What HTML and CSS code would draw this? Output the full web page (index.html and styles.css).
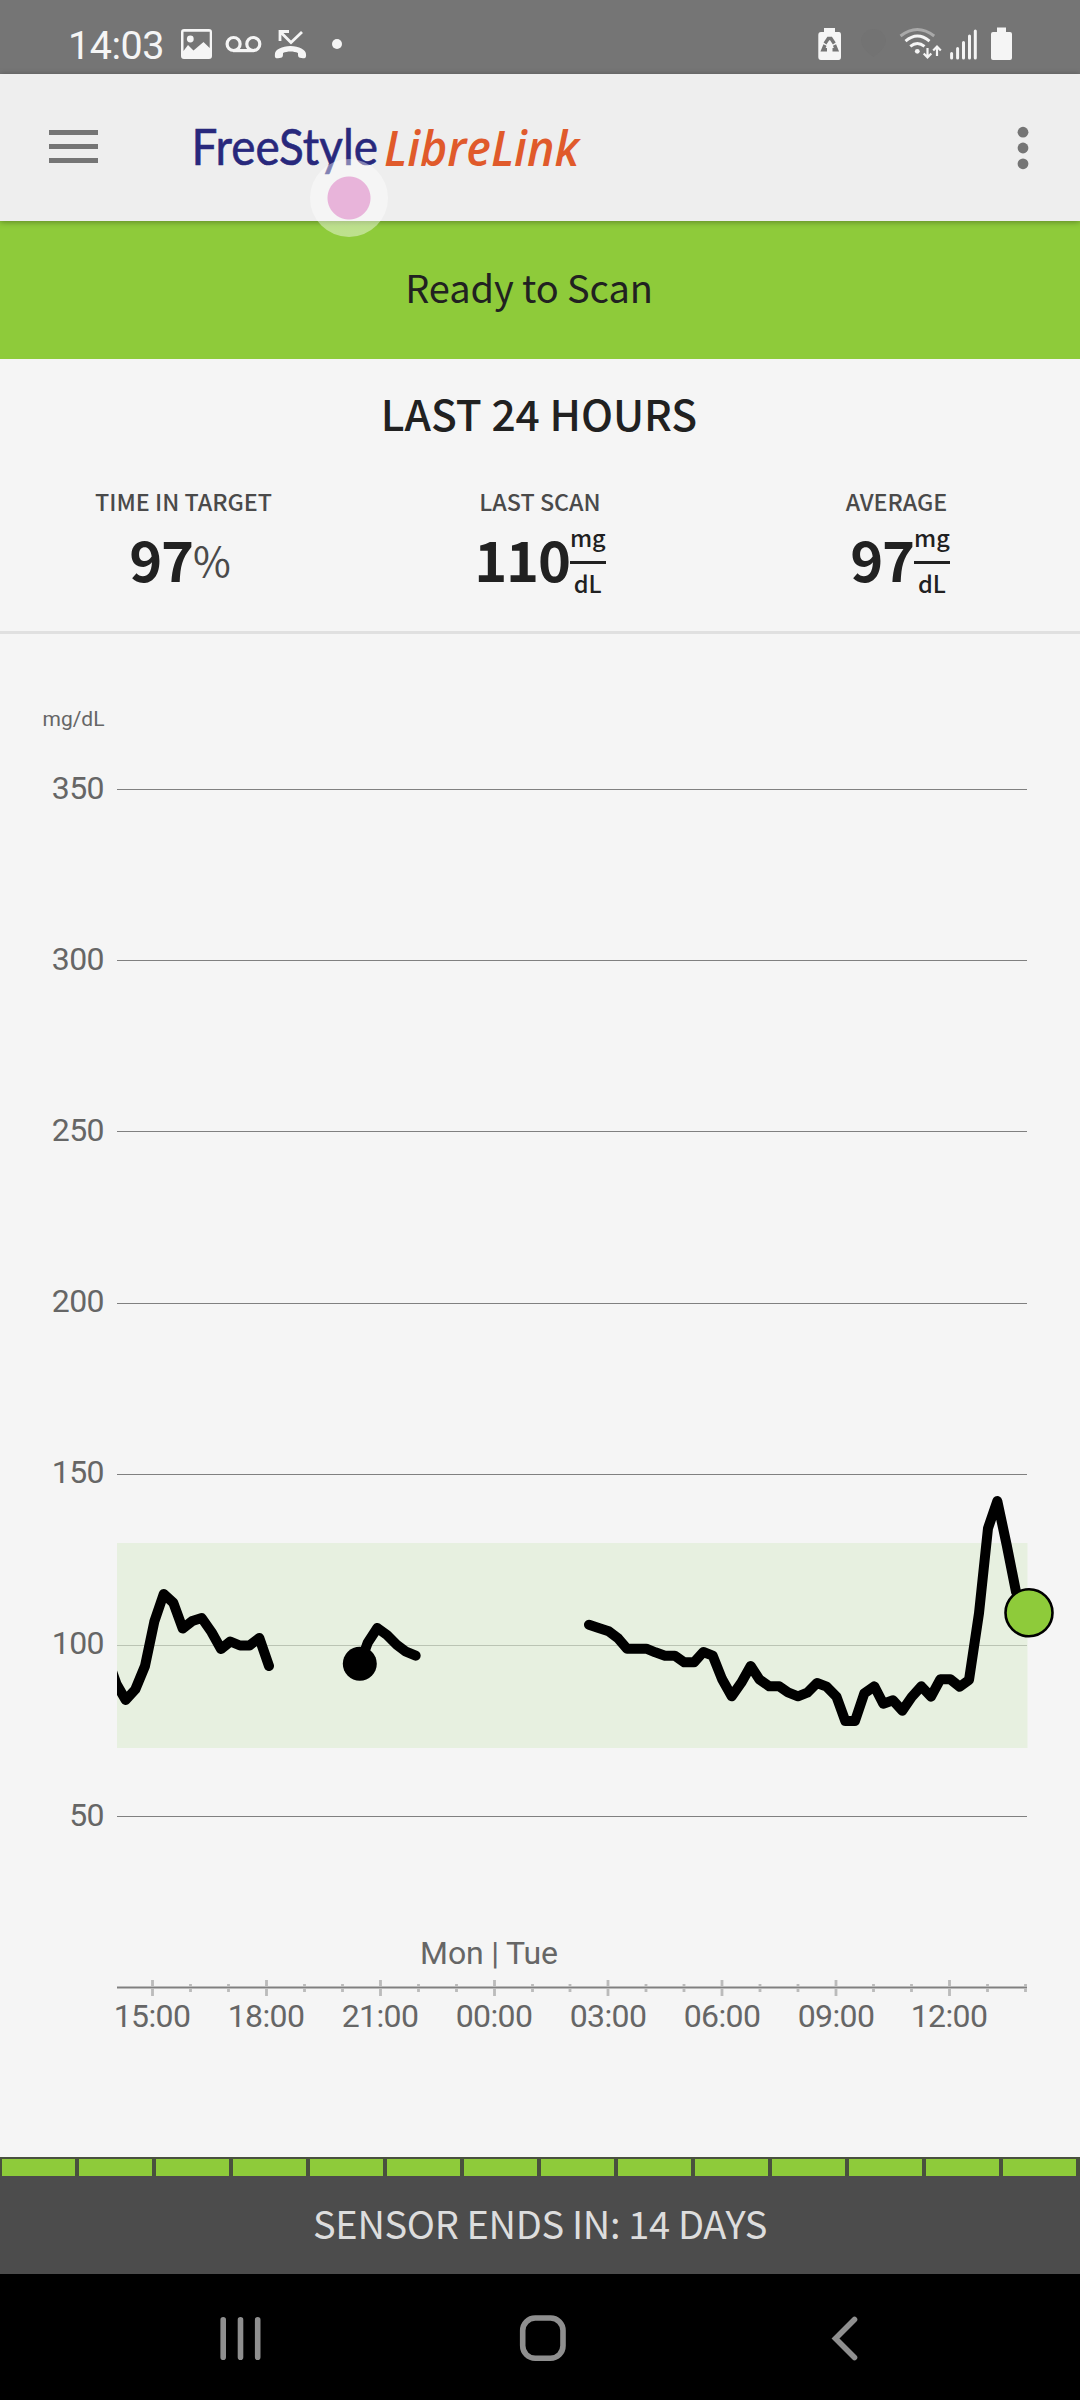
FILE: index.html
```html
<!DOCTYPE html>
<html lang="en">
<head>
<meta charset="utf-8">
<title>FreeStyle LibreLink</title>
<link rel="stylesheet" href="styles.css">
</head>
<body>
<div class="screen">
  <header class="status">
    <span class="clock">14:03</span>
    <svg class="status-left" width="166" height="74" viewBox="176 0 166 74" fill="#f5f5f5">
      <path fill-rule="evenodd" d="M184 29H209Q212 29 212 32V56Q212 59 209 59H184Q181 59 181 56V32Q181 29 184 29ZM183.500 31.700V51L188 45L193.500 50.500L203.500 42L209.700 48V31.700Z"/>
      <circle cx="190.300" cy="39" r="3.400"/>
      <g fill="none" stroke="#f5f5f5" stroke-width="3.200"><circle cx="233.600" cy="44" r="6.500"/><circle cx="253.300" cy="44" r="6.500"/><path d="M233 50.600H254"/></g>
      <path d="M275 53.500C275 50 282 46 290.500 46S306 50 306 54C306.500 58 305 58.500 303 58.200C298 58 298 57 298 53C294 51 287 51 283 53C283 57 283 58 278 58.200C275.500 58.500 274.500 58 275 53.500Z"/>
      <path d="M289 31.500H280V41M280.500 32L291 42.500L302 32" fill="none" stroke="#f5f5f5" stroke-width="2.800"/>
      <circle cx="337" cy="44" r="5"/>
    </svg>
    <svg class="status-right" width="210" height="74" viewBox="810 0 210 74" fill="#f5f5f5">
      <path d="M824 28H835V32H839Q841 32 841 35V57Q841 60 838.500 60H821Q818.300 60 818.300 57V35Q818.300 32 821 32H824Z"/>
      <path d="M825 43.500L828.300 38.500H831L834.300 43.500M834.500 45L836.500 49.800H832.500M827 49.800H823L825 45" fill="none" stroke="#757575" stroke-width="3.400"/>
      <path d="M829.700 41.500L833.300 46H830.700V52H828.700V46H826.100Z"/>
      <path d="M873.500 29A12.500 12.500 0 0 1 886 41.500Q884 50 873.500 57Q863 50 861 41.500A12.500 12.500 0 0 1 873.500 29Z" fill="#737373"/>
      <g fill="none" stroke="#f5f5f5" stroke-width="2.900">
        <path d="M900.500 36Q917.300 23 934.200 36" stroke="#a9a9a9"/><path d="M905.500 41.200Q917.300 31 929.500 41.200"/><path d="M910.300 46.300Q917.300 40.500 924.500 46.300"/>
      </g>
      <circle cx="917.300" cy="51.300" r="2.400"/>
      <path d="M927.500 48V57M923.700 53.500L927.500 57.500L931.300 53.500M937 56V47M933.200 50.500L937 46.500L940.800 50.500" fill="none" stroke="#f5f5f5" stroke-width="2.200"/>
      <path d="M951.600 53.500V58M957.600 48.500V58M963.500 42.500V58M969.500 36V58M975.300 31V58" fill="none" stroke="#f5f5f5" stroke-width="3" stroke-linecap="round"/>
      <path d="M997 27.500H1006V32H1010Q1012 32 1012 34V58Q1012 60 1010 60H993Q991 60 991 58V34Q991 32 993 32H997Z"/>
    </svg>
  </header>

  <nav class="appbar">
    <svg class="menu" width="49" height="35" viewBox="0 0 49 35" fill="#757575"><path d="M0 0H49V5H0ZM0 14H49V19H0ZM0 28H49V33H0Z"/></svg>
    <svg class="logo" width="400" height="100" viewBox="190 98 400 100">
      <text class="logo-free" x="191.500" y="165" textLength="186.500" lengthAdjust="spacingAndGlyphs">FreeStyle</text>
      <text class="logo-libre" x="384" y="166" textLength="195" lengthAdjust="spacingAndGlyphs">LibreLink</text>
    </svg>
    <svg class="more" width="12" height="44" viewBox="0 0 12 44" fill="#757575"><circle cx="6" cy="6.200" r="5.400"/><circle cx="6" cy="22" r="5.400"/><circle cx="6" cy="37.800" r="5.400"/></svg>
    <span class="touch"></span>
  </nav>

  <div class="scan">Ready to Scan</div>

  <section class="summary">
    <h1>LAST 24 HOURS</h1>
    <div class="stats">
      <div class="stat"><div class="label">TIME IN TARGET</div><div class="value first"><b>97</b><span class="percent">%</span></div></div>
      <div class="stat"><div class="label">LAST SCAN</div><div class="value"><b>110</b><span class="unit"><span class="top">mg</span><span class="bottom">dL</span></span></div></div>
      <div class="stat"><div class="label">AVERAGE</div><div class="value shift"><b>97</b><span class="unit"><span class="top">mg</span><span class="bottom">dL</span></span></div></div>
    </div>
  </section>

  <svg class="chart" width="1080" height="1523" viewBox="0 634 1080 1523">
    <path class="grid" d="M117 789.500H1027M117 960.500H1027M117 1131.500H1027M117 1303.500H1027M117 1474.500H1027M117 1645.500H1027M117 1816.500H1027"/>
    <rect x="117" y="1543" width="910.500" height="205" fill="#deedd3" fill-opacity=".62"/>
    <g class="ylabels">
      <text class="small" x="104.500" y="726">mg/dL</text>
      <text x="104" y="798.500">350</text><text x="104" y="969.700">300</text><text x="104" y="1140.900">250</text><text x="104" y="1312">200</text><text x="104" y="1483.200">150</text><text x="104" y="1654.400">100</text><text x="104" y="1825.500">50</text>
    </g>
    <path d="M117 1987.500H1027" stroke="#bbb" stroke-width="3"/>
    <path d="M152.500 1980V1996M266.500 1980V1996M380.500 1980V1996M494.500 1980V1996M608 1980V1996M722 1980V1996M836 1980V1996M949.500 1980V1996M190.500 1984V1992M228.500 1984V1992M304.500 1984V1992M342.500 1984V1992M418.500 1984V1992M456.500 1984V1992M532.500 1984V1992M570 1984V1992M646 1984V1992M684 1984V1992M760 1984V1992M798 1984V1992M873.500 1984V1992M911.500 1984V1992M987.500 1984V1992M1025.500 1984V1992" stroke="#bbb" stroke-width="2.800"/>
    <path class="grid" d="M117 1987.500H1027"/>
    <g class="xlabels">
      <text x="152" y="2026.700">15:00</text><text x="266" y="2026.700">18:00</text><text x="380" y="2026.700">21:00</text><text x="494" y="2026.700">00:00</text><text x="608" y="2026.700">03:00</text><text x="722" y="2026.700">06:00</text><text x="836" y="2026.700">09:00</text><text x="949" y="2026.700">12:00</text>
      <text class="day" x="489" y="1964">Mon | Tue</text>
    </g>
    <clipPath id="plot"><rect x="117" y="700" width="963" height="1290"/></clipPath>
    <g class="trace" clip-path="url(#plot)">
      <polyline points="108,1660 116.500,1684 125.700,1700 135.300,1689.500 145,1666 154.300,1621.700 163.700,1594 173.300,1602.700 182.700,1628.500 192.300,1621 201.700,1618 211.500,1632 221,1649 230.300,1641.500 240,1645.500 249.500,1645.500 259.300,1638 269,1666"/>
      <polyline points="360,1664 367.700,1642.700 377.300,1628 387,1635 396.700,1644.700 406,1651.700 415.700,1655.700"/>
      <polyline points="589,1624.700 598.700,1628 608.700,1631.300 618,1638.300 627,1648.700 636.700,1648.700 646.300,1648.700 655.300,1652.300 665,1655.700 674.700,1655.700 684.300,1662.300 694,1662.300 703.300,1652 712.700,1655.700 722,1679 731.700,1696.300 741.300,1682.700 750.700,1666 759.300,1679.300 769.300,1686.300 779.300,1686.300 788,1692.300 798,1696.300 807.300,1692.700 817,1683 826.700,1686.700 836.500,1696.700 845.300,1721 855,1721 864.300,1693.300 874.300,1686.300 883.300,1703.700 893,1700.300 902.300,1710.700 911.700,1697 921.300,1686.300 931,1696.700 940.300,1679.300 950.300,1679.300 959.700,1686.700 969,1680 979,1613.300 988,1528.300 997.300,1501 1006.700,1545 1016,1591.700 1028,1613"/>
    </g>
    <circle cx="359.800" cy="1663.700" r="17"/>
    <circle cx="1029" cy="1612.700" r="23.500" fill="#8ecb3a" stroke="#000" stroke-width="2.600"/>
  </svg>

  <footer class="sensor">
    <div class="days"><i></i><i></i><i></i><i></i><i></i><i></i><i></i><i></i><i></i><i></i><i></i><i></i><i></i><i></i></div>
    <div class="sensor-text">SENSOR ENDS IN: 14 DAYS</div>
  </footer>

  <div class="navbar">
    <svg width="1080" height="126" viewBox="0 2274 1080 126" fill="none" stroke="#8f8f8f" stroke-width="5.600" stroke-linecap="round">
      <path d="M223.200 2319.800V2357.200M240.500 2319.800V2357.200M257.700 2319.800V2357.200"/>
      <rect x="522.700" y="2318" width="40.300" height="40.300" rx="12.500"/>
      <path d="M854.500 2319.500L835.500 2338.500L854.500 2357.500"/>
    </svg>
  </div>
</div>
</body>
</html>
```
FILE: styles.css
```css
* { box-sizing: border-box; }
body { margin: 0; background: #f5f5f5; font-family: "Noto Sans CJK SC", "Noto Sans", sans-serif; color: #212121; }
svg { display: block; }
.screen { display: flex; flex-direction: column; width: 1080px; height: 2400px; overflow: hidden; }

.status { display: flex; height: 74px; background: #757575; padding-left: 68px; }
.clock { width: 108px; font: 39.5px/91px Roboto, sans-serif; color: #f5f5f5; letter-spacing: -0.5px; }
.status-right { margin: 0 60px 0 auto; }

.appbar { position: relative; display: flex; align-items: center; height: 147px; padding: 0 51px 0 49px; background: #eee; z-index: 1; box-shadow: 0 1px 6px rgba(0, 0, 0, .35); }
.logo { margin-left: 92px; }
.more { margin-left: auto; }
.logo-free { font: 400 50px Lato, sans-serif; fill: #28287c; stroke: #28287c; stroke-width: .6px; }
.logo-libre { font: italic 600 48px "Open Sans", sans-serif; fill: #e05a2b; }
.touch { position: absolute; left: 310px; top: 85px; width: 78px; height: 78px; border-radius: 50%; background: radial-gradient(circle, #e8b4da 21px, rgba(255, 255, 255, .42) 22px); }

.scan { height: 138px; background: #8ecb3a; text-align: center; font-size: 38px; letter-spacing: -0.1px; line-height: 132px; padding-right: 22px; }

.summary { height: 275px; border-bottom: 3px solid #e0e0e0; }
h1 { margin: 0; padding-top: 29px; font-size: 42.5px; font-weight: 500; line-height: 50px; text-align: center; padding-right: 2px; }
.stats { display: grid; grid-template-columns: 367px 346px 367px; margin-top: 47px; }
.label { font-size: 23.3px; line-height: 32px; font-weight: 500; color: #4a4a4a; text-align: center; }
.value { display: flex; justify-content: center; height: 82px; margin-top: 6px; }
.first { padding-right: 7px; }
.shift { padding-left: 7px; }
.value b { font-size: 56px; line-height: 69px; font-weight: 700; letter-spacing: -1.2px; }
.percent { font-size: 41px; line-height: 72px; color: #4a4a4a; }
.unit { display: flex; flex-direction: column; width: 36px; text-align: center; font-size: 23.5px; font-weight: 500; }
.top { height: 41px; line-height: 29px; border-bottom: 3px solid #212121; }
.bottom { line-height: 39px; }

.chart { flex: none; }
.grid { stroke: #808080; stroke-width: 1; }
.ylabels text, .xlabels text { font: 32px Roboto, sans-serif; fill: #666; letter-spacing: -0.6px; }
.ylabels text { text-anchor: end; }
.ylabels .small { font-size: 21px; letter-spacing: 0; }
.xlabels text { text-anchor: middle; }
.xlabels .day { letter-spacing: -0.15px; }
.trace { fill: none; stroke: #000; stroke-width: 10; stroke-linecap: round; stroke-linejoin: round; }

.sensor { height: 117px; background: #4c4c4c; }
.days { display: grid; grid-template-columns: repeat(14, 73px); gap: 4px; padding: 2px; height: 21px; background: #49503e; border-bottom: 2px solid #4c4c4c; }
.days i { background: #8ecb3a; height: 17px; }
.sensor-text { text-align: center; font-size: 38px; letter-spacing: -0.35px; line-height: 89px; color: #ddd; }
.navbar { height: 126px; background: #000; }
```
